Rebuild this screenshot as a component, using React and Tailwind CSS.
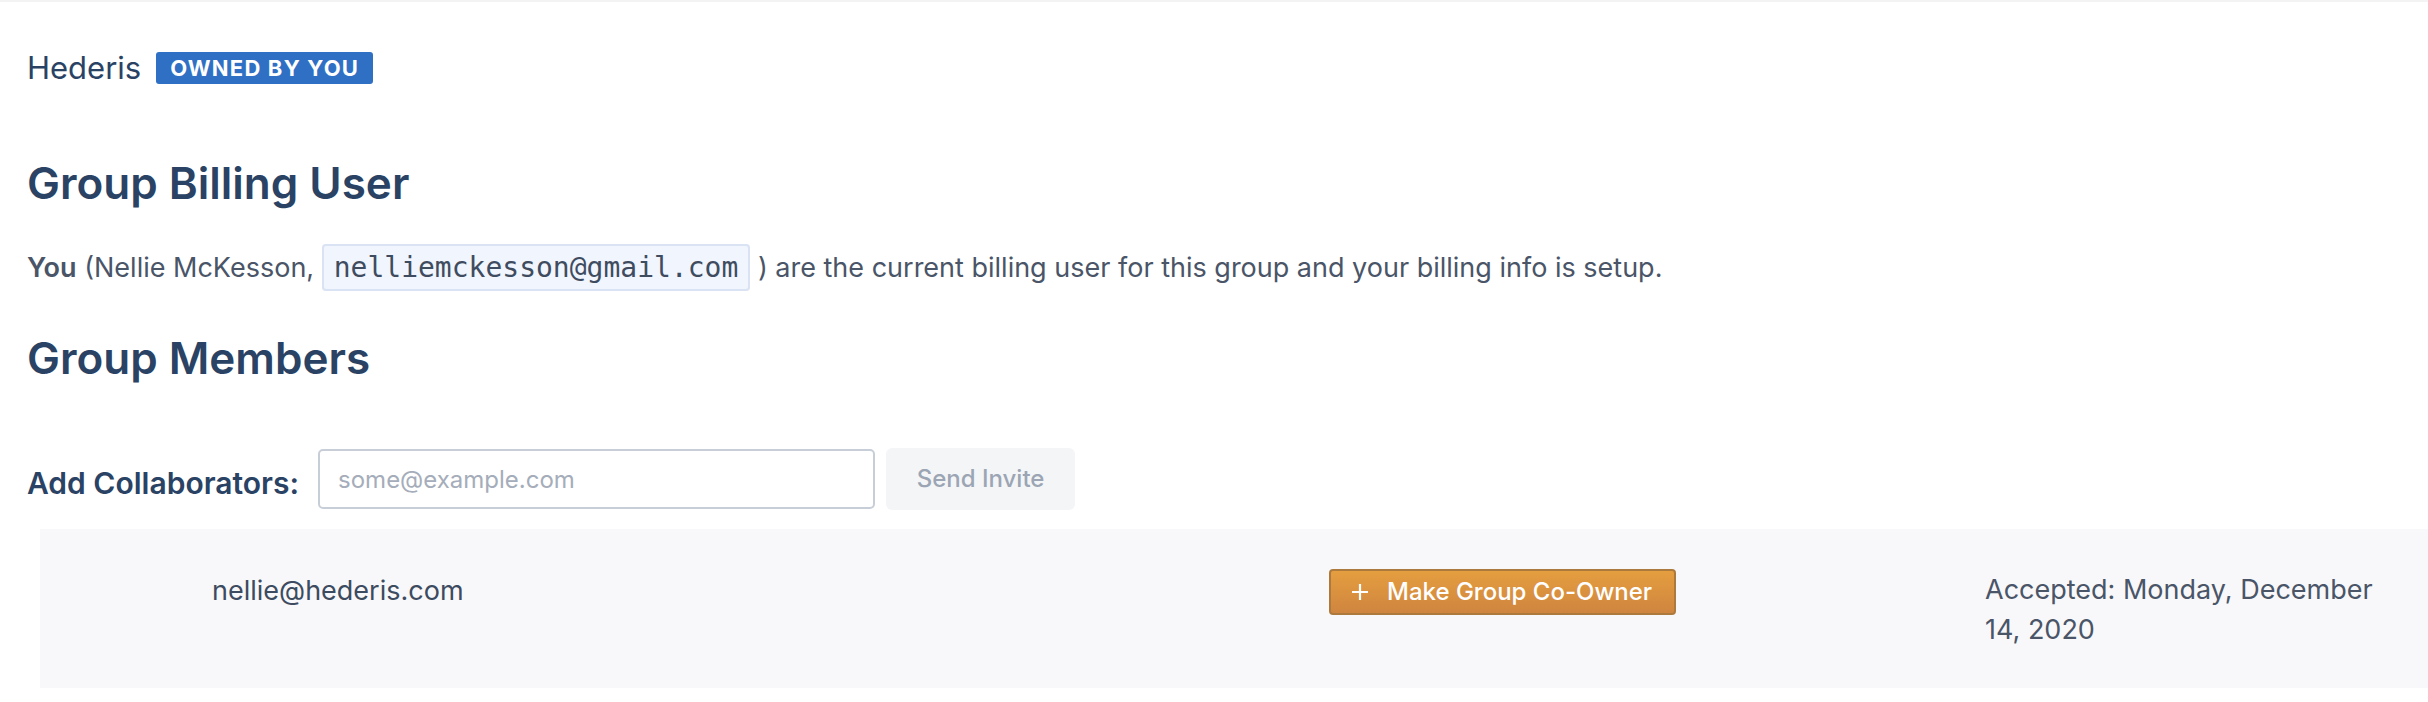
import React from 'react';

function App() {
  return (
    <div className="min-h-screen bg-white font-['Inter',sans-serif] overflow-hidden">
      {/* top edge */}
      <div className="h-[2px] bg-[#f3f3f4]" />

      <div className="pl-[27px]">
        {/* Group name + badge */}
        <div className="mt-[43px] flex items-center h-[45px]">
          <span className="text-[31px] text-[#2a4365] leading-none">Hederis</span>
          <span className="ml-[15px] bg-[#2f6fc4] text-white text-[22px] font-bold tracking-[1.2px] leading-none px-[14px] py-[5px] rounded-[3px]">
            OWNED BY YOU
          </span>
        </div>

        {/* Billing user */}
        <h2 className="mt-[67px] text-[44px] leading-[52px] font-semibold text-[#2a4365]">Group Billing User</h2>
        <p className="mt-[41px] text-[27px] leading-[36px] text-[#4a5568]">
          <span className="font-semibold">You</span> (Nellie McKesson,{' '}
          <code className="font-['DejaVu_Sans_Mono',monospace] text-[28px] text-[#3f4c5f] bg-[#f0f5fe] border-2 border-[#d9e3f3] rounded-[4px] px-[10px] py-[5px]">
            nelliemckesson@gmail.com
          </code>
          {' '}) are the current billing user for this group and your billing info is setup.
        </p>

        {/* Members */}
        <h2 className="mt-[46px] text-[44px] leading-[52px] font-semibold text-[#2a4365]">Group Members</h2>

        <div className="mt-[64px] flex items-center">
          <label className="text-[30px] font-semibold text-[#2a4365] mr-[19px] mt-[8px]">Add Collaborators:</label>
          <input
            type="text"
            placeholder="some@example.com"
            className="w-[557px] h-[60px] border-2 border-[#c8ced8] rounded-[5px] px-[18px] text-[24px] text-[#4a5568] placeholder:text-[#a5adba] outline-none"
          />
          <button className="ml-[11px] w-[189px] h-[62px] bg-[#f4f5f7] rounded-[6px] text-[24px] font-medium text-[#9ba5b4]">
            Send Invite
          </button>
        </div>
      </div>

      {/* Member row */}
      <div className="mt-[19px] ml-[40px] bg-[#f8f8fa] h-[159px] pt-[40px] flex items-start">
        <div className="w-[1289px] pl-[172px] text-[27px] leading-[40px] text-[#3d4b60] mt-[2px]">nellie@hederis.com</div>
        <div className="w-[656px]">
          <button className="flex items-center h-[46px] pl-[20px] pr-[22px] rounded-[4px] border-2 border-[#ad7a3e] bg-gradient-to-b from-[#e59e3f] to-[#cf853f] text-white text-[24px] font-medium">
            <svg width="18" height="18" viewBox="0 0 18 18" className="mr-[18px]">
              <path d="M9 1v16M1 9h16" stroke="white" strokeWidth="2.2" fill="none" />
            </svg>
            Make Group Co-Owner
          </button>
        </div>
        <div className="w-[400px] text-[27px] leading-[40px] text-[#4a5568] mt-[1px]">
          Accepted: Monday, December 14, 2020
        </div>
      </div>
    </div>
  );
}

export default App;
